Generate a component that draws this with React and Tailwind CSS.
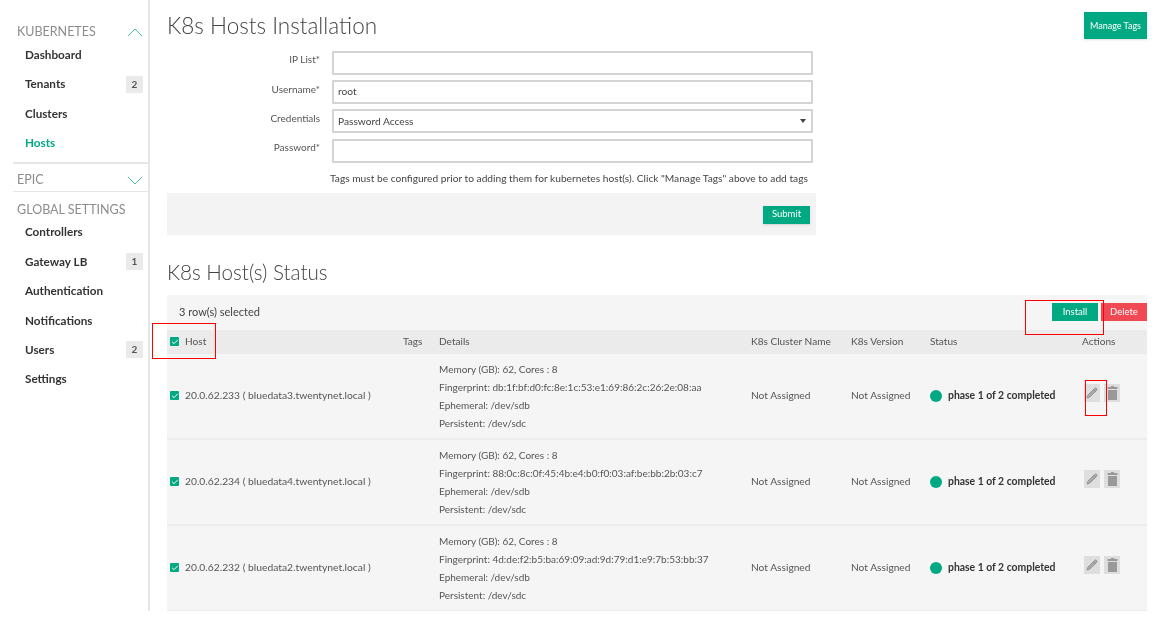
import { Pencil, Check } from 'lucide-react'

const NAV_TOP = [
  { label: 'Dashboard' },
  { label: 'Tenants', badge: 2 },
  { label: 'Clusters' },
  { label: 'Hosts', active: true },
]

const NAV_GLOBAL = [
  { label: 'Controllers' },
  { label: 'Gateway LB', badge: 1 },
  { label: 'Authentication' },
  { label: 'Notifications' },
  { label: 'Users', badge: 2 },
  { label: 'Settings' },
]

const HOSTS = [
  { name: '20.0.62.233 ( bluedata3.twentynet.local )', fingerprint: 'db:1f:bf:d0:fc:8e:1c:53:e1:69:86:2c:26:2e:08:aa' },
  { name: '20.0.62.234 ( bluedata4.twentynet.local )', fingerprint: '88:0c:8c:0f:45:4b:e4:b0:f0:03:af:be:bb:2b:03:c7' },
  { name: '20.0.62.232 ( bluedata2.twentynet.local )', fingerprint: '4d:de:f2:b5:ba:69:09:ad:9d:79:d1:e9:7b:53:bb:37' },
]

const COLS = 'grid grid-cols-[15px_218px_36px_312px_100px_79px_152px_1fr]'

function Chevron({ up }) {
  return (
    <svg width="16" height="9" viewBox="0 0 16 9" fill="none" stroke="#01a982" strokeOpacity="0.7" strokeWidth="1">
      <path d={up ? 'M1 8 L8 1 L15 8' : 'M1 1 L8 8 L15 1'} />
    </svg>
  )
}

function NavItem({ item }) {
  return (
    <div className="h-[29.4px] flex items-center justify-between pl-[25px] pr-[5px]">
      <span className={`text-[11.7px] font-bold ${item.active ? 'text-[#01a982]' : 'text-[#333]'}`}>{item.label}</span>
      {item.badge && (
        <span className="w-[17px] h-[17px] bg-[#eaeaea] text-[#555] text-[10px] font-bold flex items-center justify-center">{item.badge}</span>
      )}
    </div>
  )
}

function Checkbox() {
  return (
    <span className="w-[9px] h-[9px] rounded-[1px] bg-[#01a982] flex items-center justify-center">
      <Check size={8} strokeWidth={3} className="text-white" />
    </span>
  )
}

function FormRow({ label, children }) {
  return (
    <div className="h-[29.4px] flex items-center">
      <label className="w-[153px] -mt-[6px] text-right text-[10px] text-[#555]">{label}</label>
      <div className="ml-[12px] w-[481px] h-[24px] border-2 border-[#d4d4d4] rounded-[1px] flex items-center justify-between pl-[4px] pr-[5px] text-[10.2px] text-[#444]">
        {children}
      </div>
    </div>
  )
}

function IconBtn({ children }) {
  return <span className="w-[16px] h-[18px] bg-[#dedede] flex items-center justify-center">{children}</span>
}

export default function App() {
  return (
    <div className="relative w-[1155px] h-[620px] bg-white overflow-hidden font-['Lato',sans-serif] blur-[0.45px]">
      <div className="flex h-[611px] overflow-hidden">
        {/* Sidebar */}
        <aside className="w-[150px] shrink-0 border-r-2 border-[#e6e6e6] pt-[23px]">
          <div className="pl-[17px] pr-[5px] h-[18px] flex items-center justify-between text-[12.5px] text-[#8c8c8c]">
            KUBERNETES
            <Chevron up />
          </div>
          <div className="-mt-[1px]">
            {NAV_TOP.map(i => <NavItem key={i.label} item={i} />)}
          </div>
          <div className="ml-[13px] mt-[4px] border-t-2 border-[#e6e6e6] h-[29px] pt-[6px] pl-[4px] pr-[5px] flex items-center justify-between text-[12.5px] text-[#8c8c8c]">
            EPIC
            <Chevron />
          </div>
          <div className="ml-[13px] border-t border-[#e6e6e6] pl-[4px] pt-[10px] h-[23px] text-[12.5px] leading-[16px] text-[#8c8c8c]">GLOBAL SETTINGS</div>
          <div className="mt-[4px]">
            {NAV_GLOBAL.map(i => <NavItem key={i.label} item={i} />)}
          </div>
        </aside>

        {/* Main */}
        <main className="flex-1 pl-[17px] pr-[8px] min-w-0">
          <div className="flex justify-between items-start h-[49px]">
            <h1 className="mt-[12px] text-[22.5px] leading-[28px] font-light text-[#444]">K8s Hosts Installation</h1>
            <button className="mt-[12px] w-[63px] h-[27px] bg-[#01a982] text-white text-[9px] shadow-sm">Manage Tags</button>
          </div>

          <div className="-mt-[1px]">
            <FormRow label="IP List*" />
            <FormRow label="Username*">root</FormRow>
            <FormRow label="Credentials">
              Password Access
              <span className="w-0 h-0 border-x-[3.5px] border-x-transparent border-t-[4px] border-t-[#444]" />
            </FormRow>
            <FormRow label="Password*" />
          </div>
          <p className="mt-[5px] pl-[163px] text-[10.2px] leading-[14px] text-[#444]">Tags must be configured prior to adding them for kubernetes host(s). Click "Manage Tags" above to add tags</p>

          <div className="mt-[8px] w-[649px] h-[42px] bg-[#f3f3f3] flex items-end justify-end pr-[6px] pb-[11px]">
            <button className="w-[47px] h-[18px] bg-[#01a982] text-white text-[9.5px] shadow-sm">Submit</button>
          </div>

          <h2 className="mt-[25px] text-[20.6px] leading-[24px] font-light text-[#444]">K8s Host(s) Status</h2>

          <div className="mt-[11px] bg-[#f5f5f5]">
            <div className="h-[35px] flex items-center justify-between pl-[12px]">
              <span className="text-[11px] text-[#444]">3 row(s) selected</span>
              <div className="flex gap-[3px]">
                <button className="w-[46px] h-[18px] bg-[#01a982] text-white text-[9.5px]">Install</button>
                <button className="w-[46px] h-[18px] bg-[#f04953] text-white text-[9.5px]">Delete</button>
              </div>
            </div>

            <div className={`${COLS} h-[24px] items-center bg-[#ebebeb] pl-[3px] text-[10.1px] text-[#555]`}>
              <Checkbox />
              <span>Host</span>
              <span>Tags</span>
              <span>Details</span>
              <span>K8s Cluster Name</span>
              <span>K8s Version</span>
              <span>Status</span>
              <span>Actions</span>
            </div>

            {HOSTS.map(h => (
              <div key={h.name} className={`${COLS} h-[86px] items-center pl-[3px] border-b-2 border-[#ececec] text-[10.2px] text-[#555]`}>
                <Checkbox />
                <span className="text-[10.3px] whitespace-nowrap">{h.name}</span>
                <span />
                <div className="text-[10px] leading-[18px] whitespace-nowrap">
                  <div>Memory (GB): 62, Cores : 8</div>
                  <div>Fingerprint: {h.fingerprint}</div>
                  <div>Ephemeral: /dev/sdb</div>
                  <div>Persistent: /dev/sdc</div>
                </div>
                <span>Not Assigned</span>
                <span>Not Assigned</span>
                <div className="flex items-center gap-[6px]">
                  <span className="w-[12px] h-[12px] rounded-full bg-[#01a982]" />
                  <span className="text-[10.4px] font-bold text-[#333] whitespace-nowrap">phase 1 of 2 completed</span>
                </div>
                <div className="flex gap-[4px] pl-[2px] -mt-[6px]">
                  <IconBtn><Pencil size={12} strokeWidth={1.5} className="text-[#888]" fill="#aaa" /></IconBtn>
                  <IconBtn>
                    <svg width="11" height="14" viewBox="0 0 11 14" fill="#999">
                      <path d="M4 0h3v1h3.5v2H.5V1H4zM1 4h9v10H1z" />
                    </svg>
                  </IconBtn>
                </div>
              </div>
            ))}
          </div>
        </main>
      </div>

      {/* Red annotation boxes */}
      <div className="absolute left-[152px] top-[323px] w-[64px] h-[36px] border border-[#ff0000]" />
      <div className="absolute left-[1025px] top-[300px] w-[79px] h-[35px] border border-[#ff0000]" />
      <div className="absolute left-[1085px] top-[380px] w-[22px] h-[36px] border border-[#ff0000]" />
    </div>
  )
}
